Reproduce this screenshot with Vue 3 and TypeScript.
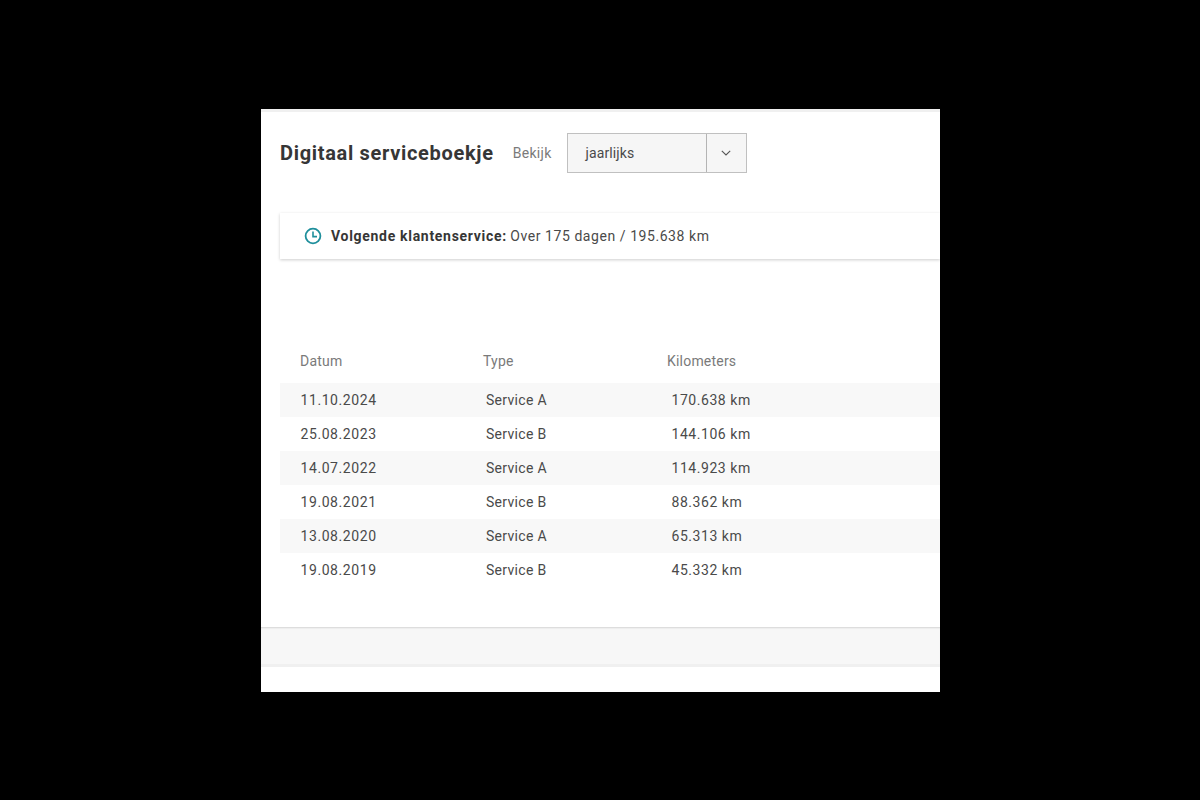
<script setup lang="ts">
interface Row { date: string; type: string; km: string }
const rows: Row[] = [
  { date: '11.10.2024', type: 'Service A', km: '170.638 km' },
  { date: '25.08.2023', type: 'Service B', km: '144.106 km' },
  { date: '14.07.2022', type: 'Service A', km: '114.923 km' },
  { date: '19.08.2021', type: 'Service B', km: '88.362 km' },
  { date: '13.08.2020', type: 'Service A', km: '65.313 km' },
  { date: '19.08.2019', type: 'Service B', km: '45.332 km' },
]
</script>

<template>
  <div class="stage">
    <main class="panel">
      <header class="head">
        <h1 class="title">Digitaal serviceboekje</h1>
        <span class="view">Bekijk</span>
        <div class="select">
          <span class="value">jaarlijks</span>
          <span class="caret">
            <svg width="10" height="6" viewBox="0 0 10 6" fill="none"><path d="M.8.8 5 5l4.2-4.2" stroke="#555" stroke-width="1.1"/></svg>
          </span>
        </div>
      </header>

      <section class="notice">
        <svg class="clock" width="18" height="18" viewBox="0 0 18 18" fill="none">
          <circle cx="9" cy="9" r="7.4" stroke="#1f8f9c" stroke-width="1.8"/>
          <path d="M9 4.6V9.6H13" stroke="#1f8f9c" stroke-width="1.6"/>
        </svg>
        <p class="notice-text"><strong>Volgende klantenservice:</strong> <span class="notice-rest">Over 175 dagen / 195.638 km</span></p>
      </section>

      <section class="table">
        <div class="thead">
          <span>Datum</span>
          <span>Type</span>
          <span>Kilometers</span>
        </div>
        <div v-for="row in rows" :key="row.date" class="row">
          <span class="date">{{ row.date }}</span>
          <span class="type">{{ row.type }}</span>
          <span class="km">{{ row.km }}</span>
        </div>
      </section>

      <div class="band"></div>
    </main>
  </div>
</template>

<style>
html, body { margin: 0; background: #000; }
</style>

<style scoped>
.stage {
  width: 1200px;
  height: 800px;
  background: #000;
  padding: 109px 260px 108px 261px;
  box-sizing: border-box;
  font-family: Roboto, "Liberation Sans", sans-serif;
  overflow: hidden;
}
.panel {
  height: 583px;
  background: #fff;
  border-top: 3px solid #f0f0f0;
  box-sizing: border-box;
  overflow: hidden;
  display: flex;
  flex-direction: column;
}
.head {
  display: flex;
  align-items: center;
  height: 40px;
  margin-top: 21px;
  padding-left: 19px;
}
.title {
  margin: 0;
  font-size: 20px;
  font-weight: 700;
  color: #363636;
  letter-spacing: 0.68px;
  white-space: nowrap;
}
.view {
  margin-left: 19px;
  font-size: 14px;
  color: #7a7a7a;
  letter-spacing: 0.3px;
}
.select {
  display: flex;
  margin-left: 15px;
  width: 180px;
  height: 40px;
  box-sizing: border-box;
  border: 1px solid #c0c0c0;
  background: #f6f6f6;
}
.value {
  flex: 1;
  padding-left: 18px;
  line-height: 38px;
  font-size: 14px;
  color: #4a4a4a;
  letter-spacing: 0.1px;
}
.caret {
  width: 39px;
  border-left: 1px solid #b4b4b4;
  display: flex;
  align-items: center;
  justify-content: center;
}
.notice {
  display: flex;
  align-items: center;
  margin: 40px 0 0 19px;
  height: 46px;
  padding-left: 24px;
  background: #fff;
  box-shadow: 0 1px 3px rgba(0, 0, 0, 0.2);
}
.clock { flex: none; }
.notice-text {
  margin: 0 0 0 9px;
  font-size: 14px;
  color: #4a4a4a;
  white-space: nowrap;
}
.notice-text strong { color: #363636; font-weight: 700; letter-spacing: 0.7px; }
.notice-rest { letter-spacing: 0.56px; }
.table {
  margin: 92px 0 0 19px;
  font-size: 14px;
  letter-spacing: 0.45px;
}
.thead {
  display: grid;
  grid-template-columns: 183px 184px 1fr;
  padding-left: 20px;
  height: 32px;
  line-height: 20px;
  color: #7a7a7a;
  letter-spacing: 0.2px;
}
.row {
  display: grid;
  grid-template-columns: 185px 186px 1fr;
  padding-left: 20.5px;
  height: 34px;
  line-height: 34px;
  color: #4a4a4a;
}
.date { letter-spacing: 0.58px; }
.type { letter-spacing: 0.3px; padding-left: 0.5px; }
.km { letter-spacing: 0.55px; }
.row:nth-child(even) { background: #f8f8f8; }
.band {
  margin-top: 40px;
  height: 40px;
  background: #f7f7f7;
  border-bottom: 3px solid #f0f0f0;
  box-shadow: inset 0 2px 2px -1px rgba(0, 0, 0, 0.14);
  box-sizing: border-box;
}
</style>
